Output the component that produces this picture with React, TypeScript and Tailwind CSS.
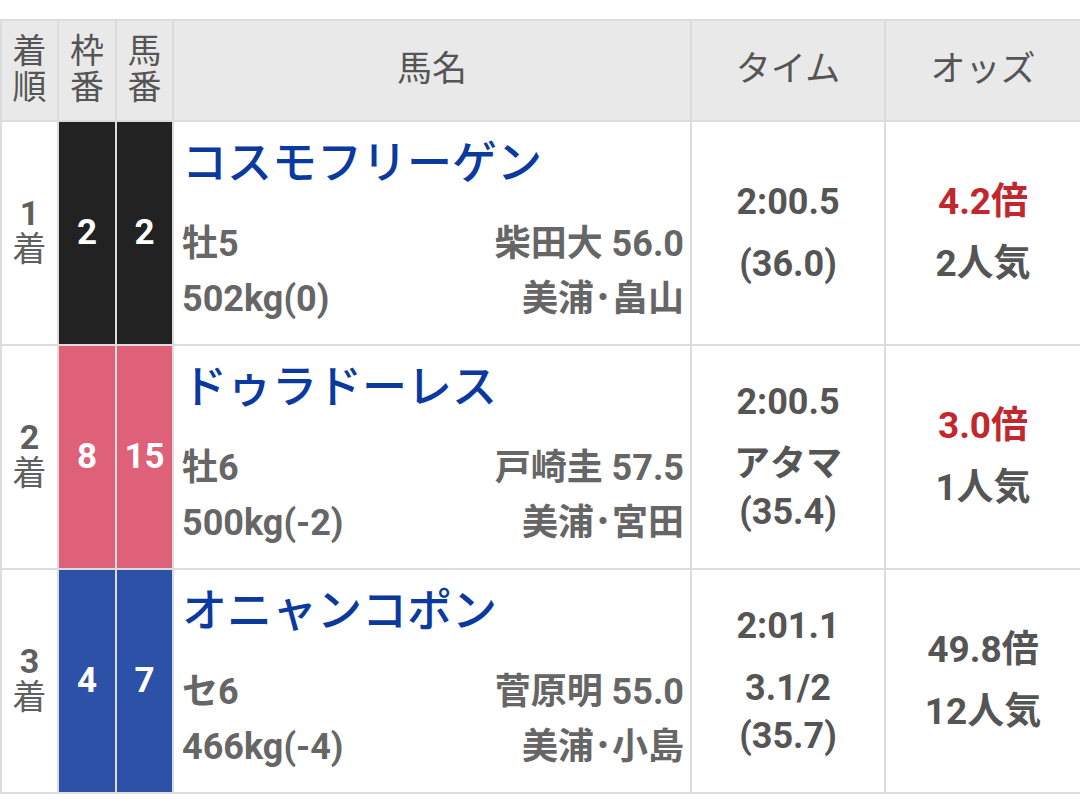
type Result = {
  rank: number;
  waku: number;
  uma: number;
  frameClassName: string;
  name: string;
  sexAge: string;
  jockey: string;
  weight: string;
  trainer: string;
  time: string;
  notes: string[];
  odds: string;
  oddsHot: boolean;
  popularity: string;
};

const results: Result[] = [
  {
    rank: 1,
    waku: 2,
    uma: 2,
    frameClassName: "bg-[#222222]",
    name: "コスモフリーゲン",
    sexAge: "牡5",
    jockey: "柴田大 56.0",
    weight: "502kg(0)",
    trainer: "美浦･畠山",
    time: "2:00.5",
    notes: ["(36.0)"],
    odds: "4.2倍",
    oddsHot: true,
    popularity: "2人気",
  },
  {
    rank: 2,
    waku: 8,
    uma: 15,
    frameClassName: "bg-[#de6179]",
    name: "ドゥラドーレス",
    sexAge: "牡6",
    jockey: "戸崎圭 57.5",
    weight: "500kg(-2)",
    trainer: "美浦･宮田",
    time: "2:00.5",
    notes: ["アタマ", "(35.4)"],
    odds: "3.0倍",
    oddsHot: true,
    popularity: "1人気",
  },
  {
    rank: 3,
    waku: 4,
    uma: 7,
    frameClassName: "bg-[#2c51a7]",
    name: "オニャンコポン",
    sexAge: "セ6",
    jockey: "菅原明 55.0",
    weight: "466kg(-4)",
    trainer: "美浦･小島",
    time: "2:01.1",
    notes: ["3.1/2", "(35.7)"],
    odds: "49.8倍",
    oddsHot: false,
    popularity: "12人気",
  },
];

export default function App() {
  return (
    <div className="h-[809px] w-[1080px] overflow-hidden bg-white pt-[19px] font-[Roboto,'Noto_Sans_CJK_JP',sans-serif]">
      <div className="grid grid-cols-[55px_56px_55px_516px_192px_194px] grid-rows-[99px_222px_222px_222px] gap-[2px] bg-[#dcdcdc] py-[2px] pl-[2px]">
        {/* header */}
        <div className="flex items-center justify-center bg-[#e9e9e9] pb-[4px] text-center text-[34px] leading-[36px] text-[#555555]">
          着<br />順
        </div>
        <div className="flex items-center justify-center bg-[#e9e9e9] pb-[4px] text-center text-[34px] leading-[36px] text-[#555555]">
          枠<br />番
        </div>
        <div className="flex items-center justify-center bg-[#e9e9e9] pb-[4px] text-center text-[34px] leading-[36px] text-[#555555]">
          馬<br />番
        </div>
        <div className="flex items-center justify-center bg-[#e9e9e9] text-[35px] text-[#555555]">馬名</div>
        <div className="flex items-center justify-center bg-[#e9e9e9] text-[35px] text-[#555555]">タイム</div>
        <div className="flex items-center justify-center bg-[#e9e9e9] text-[35px] text-[#555555]">オッズ</div>

        {results.map((r) => (
          <Row key={r.rank} r={r} />
        ))}
      </div>
    </div>
  );
}

function Row({ r }: { r: Result }) {
  return (
    <>
      <div className="flex flex-col items-center justify-center bg-white pb-[4px] text-[34px] leading-[36px] text-[#5f5f5f]">
        <span className="font-bold">{r.rank}</span>
        <span>着</span>
      </div>
      <div className={`flex items-center justify-center text-[35px] font-bold text-white ${r.frameClassName}`}>
        {r.waku}
      </div>
      <div className={`flex items-center justify-center text-[35px] font-bold text-white ${r.frameClassName}`}>
        {r.uma}
      </div>
      <div className="bg-white pl-[8px] pr-[6px] pt-[14px]">
        <div className="text-[45px] font-medium leading-[56px] text-[#0b3a9f]">{r.name}</div>
        <div className="mt-[25px] text-[36px] font-bold leading-[55px] text-[#666666]">
          <div className="flex justify-between">
            <span>{r.sexAge}</span>
            <span>{r.jockey}</span>
          </div>
          <div className="flex justify-between">
            <span>{r.weight}</span>
            <span>{r.trainer}</span>
          </div>
        </div>
      </div>
      <div className="flex flex-col items-center justify-center bg-white text-[36px] font-bold leading-[48px] text-[#555555]">
        <div className="mb-[14px]">{r.time}</div>
        {r.notes.map((n) => (
          <div key={n}>{n}</div>
        ))}
      </div>
      <div className="flex flex-col items-center justify-center bg-white text-[37px] font-bold leading-[48px] text-[#555555]">
        <div className={`mb-[14px] ${r.oddsHot ? "text-[#c1272d]" : ""}`}>{r.odds}</div>
        <div>{r.popularity}</div>
      </div>
    </>
  );
}
